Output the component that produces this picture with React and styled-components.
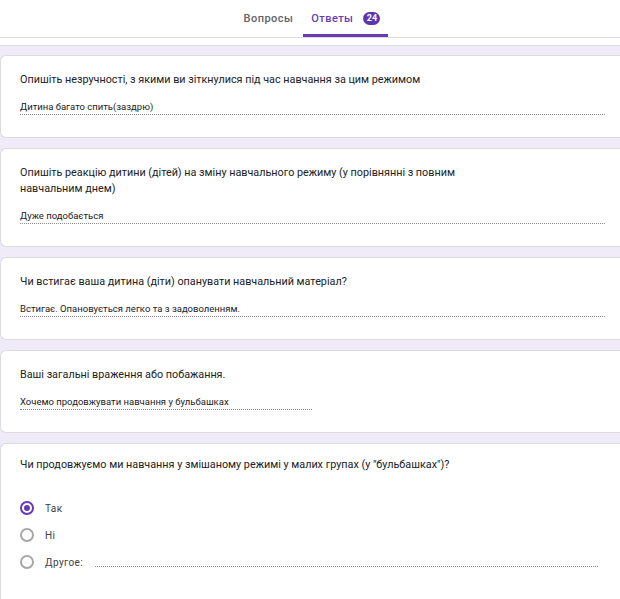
import React from 'react'
import styled, { createGlobalStyle } from 'styled-components'

const GlobalStyle = createGlobalStyle`
html, body {
    margin: 0;
    padding: 0;
    background: #f0ebf8;
    font-family: Roboto, "Open Sans", Arial, sans-serif;
    color: #202124;
}
`

const questions = [
    { title: 'Опишіть незручності, з якими ви зіткнулися під час навчання за цим режимом', answer: 'Дитина багато спить(заздрю)' },
    { title: 'Опишіть реакцію дитини (дітей) на зміну навчального режиму (у порівнянні з повним\nнавчальним днем)', answer: 'Дуже подобається' },
    { title: 'Чи встигає ваша дитина (діти) опанувати навчальний матеріал?', answer: 'Встигає. Опановується легко та з задоволенням.' },
    { title: 'Ваші загальні враження або побажання.', answer: 'Хочемо продовжувати навчання у бульбашках', short: true },
]

const App = () => {
    return (
        <>
            <GlobalStyle />
            <Header>
                <Tab>Вопросы</Tab>
                <Tab active>
                    Ответы
                    <Badge>24</Badge>
                </Tab>
            </Header>
            <PrevCardTail />
            <List>
                {questions.map((q, i) => (
                    <Card key={i}>
                        <Title>{q.title}</Title>
                        <Answer short={q.short}>{q.answer}</Answer>
                    </Card>
                ))}
                <Card last>
                    <Title>Чи продовжуємо ми навчання у змішаному режимі у малих групах (у "бульбашках")?</Title>
                    <Options>
                        <Option>
                            <Radio checked />
                            <span>Так</span>
                        </Option>
                        <Option>
                            <Radio />
                            <span>Ні</span>
                        </Option>
                        <Option>
                            <Radio />
                            <span>Другое:</span>
                            <OtherLine />
                        </Option>
                    </Options>
                </Card>
            </List>
        </>
    )
}

const Header = styled.div`
height: 37px;
padding-left: 4px;
background: #fff;
border-bottom: 1px solid #dadce0;
display: flex;
justify-content: center;
align-items: flex-end;
gap: 2px;
`
const Tab = styled.div`
height: 37px;
padding: 0 8px;
box-sizing: border-box;
display: flex;
align-items: center;
gap: 10px;
padding-top: 2px;
font-size: 11px;
font-weight: 500;
letter-spacing: 0.45px;
color: ${props => props.active ? '#673ab7' : '#5f6368'};
border-bottom: 3px solid ${props => props.active ? '#673ab7' : 'transparent'};
`
const Badge = styled.span`
min-width: 17px;
height: 13px;
border-radius: 7px;
background: #5e35b1;
color: #fff;
font-size: 9px;
font-weight: 700;
letter-spacing: 0;
display: flex;
align-items: center;
justify-content: center;
`
const PrevCardTail = styled.div`
height: 7px;
background: #fff;
border-bottom: 1px solid #dadce0;
`
const List = styled.div`
padding-top: 9px;
display: flex;
flex-direction: column;
gap: 10px;
`
const Card = styled.div`
background: #fff;
border: 1px solid #dadce0;
border-right: none;
border-radius: 6px 0 0 6px;
padding: ${props => props.last ? '13px' : '16px'} 16px ${props => props.last ? '40px' : '22px'} 19px;
margin-right: -4px;
`
const Title = styled.div`
font-size: 10.8px;
line-height: 16px;
color: #202124;
white-space: pre-line;
`
const Answer = styled.div`
margin-top: 12px;
width: ${props => props.short ? '292px' : '585px'};
font-size: 9.5px;
line-height: 14px;
color: #202124;
border-bottom: 1px dotted #8a8a8a;
`
const Options = styled.div`
margin-top: 26px;
display: flex;
flex-direction: column;
gap: 9px;
`
const Option = styled.div`
display: flex;
align-items: center;
height: 18px;
font-size: 10px;
letter-spacing: 0.4px;
color: #3c4043;
span{
    margin-left: 11px;
}
`
const Radio = styled.div`
width: 14px;
height: 14px;
border-radius: 50%;
box-sizing: border-box;
border: 2px solid ${props => props.checked ? '#673ab7' : '#a8a8a8'};
display: flex;
align-items: center;
justify-content: center;
&::after{
    content: '';
    width: 6px;
    height: 6px;
    border-radius: 50%;
    background: ${props => props.checked ? '#673ab7' : 'transparent'};
}
`
const OtherLine = styled.div`
flex: 1;
margin: 8px 10px 0 12px;
border-bottom: 1px dotted #8a8a8a;
`

export default App
